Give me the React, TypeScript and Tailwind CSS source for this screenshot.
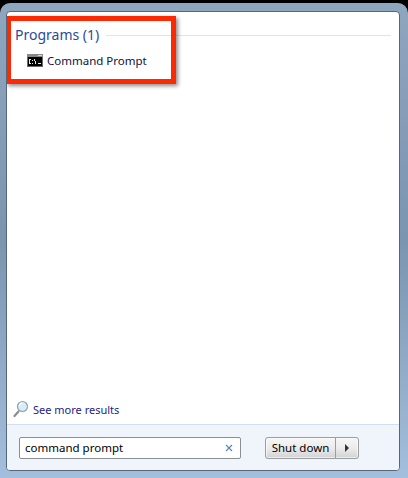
export default function App() {
  return (
    <div className="w-[408px] h-[478px] bg-black overflow-hidden font-['Noto_Sans',sans-serif]">
      <div className="w-[408px] h-[475px] mt-[3px] rounded-t-[10px] pt-[8px] pl-[6px] pr-[8px] pb-[7px] bg-gradient-to-b from-[#8fa6bf] via-[#7b94b0] to-[#a4bfdd]">
        <div className="relative w-[394px] h-[460px] flex flex-col rounded-[4px] border border-[#56677a] bg-white overflow-hidden">
          <div className="flex-1 flex flex-col pl-[8px] pr-[8px]">
            <div className="flex items-center gap-[7px] mt-[12px] h-[22px]">
              <span className="text-[14px] leading-none text-[#2c4a9c]">Programs (1)</span>
              <div className="flex-1 h-px bg-[#e2e4e6]" />
            </div>
            <div className="flex items-center gap-[4px] ml-[12px] mt-[4px] h-[20px]">
              <svg width="16" height="13" viewBox="0 0 16 13" className="shrink-0">
                <rect width="16" height="13" fill="#6b6b6b" />
                <rect y="0" width="16" height="3" fill="#8a8a8a" />
                <rect x="11" y="1" width="4" height="1" fill="#d8d8d8" />
                <rect x="1" y="3" width="14" height="9" fill="#000" />
                <rect x="2" y="5" width="2" height="5" fill="#e8e8e8" />
                <rect x="3" y="6" width="1" height="3" fill="#000" />
                <rect x="5" y="6" width="1" height="1" fill="#e8e8e8" />
                <rect x="5" y="9" width="1" height="1" fill="#e8e8e8" />
                <rect x="7" y="5" width="1" height="2" fill="#e8e8e8" />
                <rect x="8" y="7" width="1" height="3" fill="#e8e8e8" />
                <rect x="11" y="9" width="3" height="1" fill="#e8e8e8" />
              </svg>
              <span className="text-[11.5px] leading-none text-[#11113a] mt-[1px]">Command Prompt</span>
            </div>
            <div className="flex-1" />
            <div className="flex items-center gap-[4px] ml-[-2px] mb-[5px] h-[20px]">
              <svg width="16" height="18" viewBox="0 0 16 18" className="shrink-0">
                <path d="M5.5 11.5 L1.5 16" stroke="#8d8d8d" strokeWidth="2.2" strokeLinecap="round" />
                <circle cx="9.5" cy="6.5" r="5" fill="#d9ecfa" stroke="#8fa3b3" strokeWidth="1.2" />
                <path d="M6.5 6a3.2 3.2 0 0 1 3-3" stroke="#fff" strokeWidth="1.2" fill="none" />
              </svg>
              <span className="text-[11px] leading-none text-[#1c1c8c]">See more results</span>
            </div>
          </div>
          <div className="h-[46px] flex items-start pt-[12px] pl-[12px] gap-[24px] bg-[#f0f4fb] border-t border-[#d5dfec]">
            <div className="w-[222px] h-[22px] flex items-center justify-between pl-[5px] pr-[7px] bg-white border border-[#8b8f94] rounded-[2px]">
              <span className="text-[11.5px] leading-none text-black">command prompt</span>
              <svg width="8" height="8" viewBox="0 0 8 8">
                <path d="M1 1 L7 7 M7 1 L1 7" stroke="#5f86b5" strokeWidth="1.2" />
              </svg>
            </div>
            <div className="flex h-[22px] w-[94px] rounded-[3px] border border-[#9a9ea3] bg-gradient-to-b from-[#f6f6f6] via-[#ececec] to-[#d2d2d2] shadow-[inset_0_0_0_1px_rgba(255,255,255,0.6)] overflow-hidden">
              <div className="flex-1 flex items-center justify-center border-r border-[#9a9ea3]">
                <span className="text-[11.5px] leading-none text-black">Shut down</span>
              </div>
              <div className="w-[22px] flex items-center justify-center">
                <div className="w-0 h-0 border-y-[4px] border-y-transparent border-l-[4px] border-l-[#333]" />
              </div>
            </div>
          </div>
          <div className="absolute left-[-1px] top-[4px] w-[170px] h-[68px] border-[5px] border-[#fb2a04] shadow-[2px_2px_4px_rgba(0,0,0,0.45)]" />
        </div>
      </div>
    </div>
  );
}
